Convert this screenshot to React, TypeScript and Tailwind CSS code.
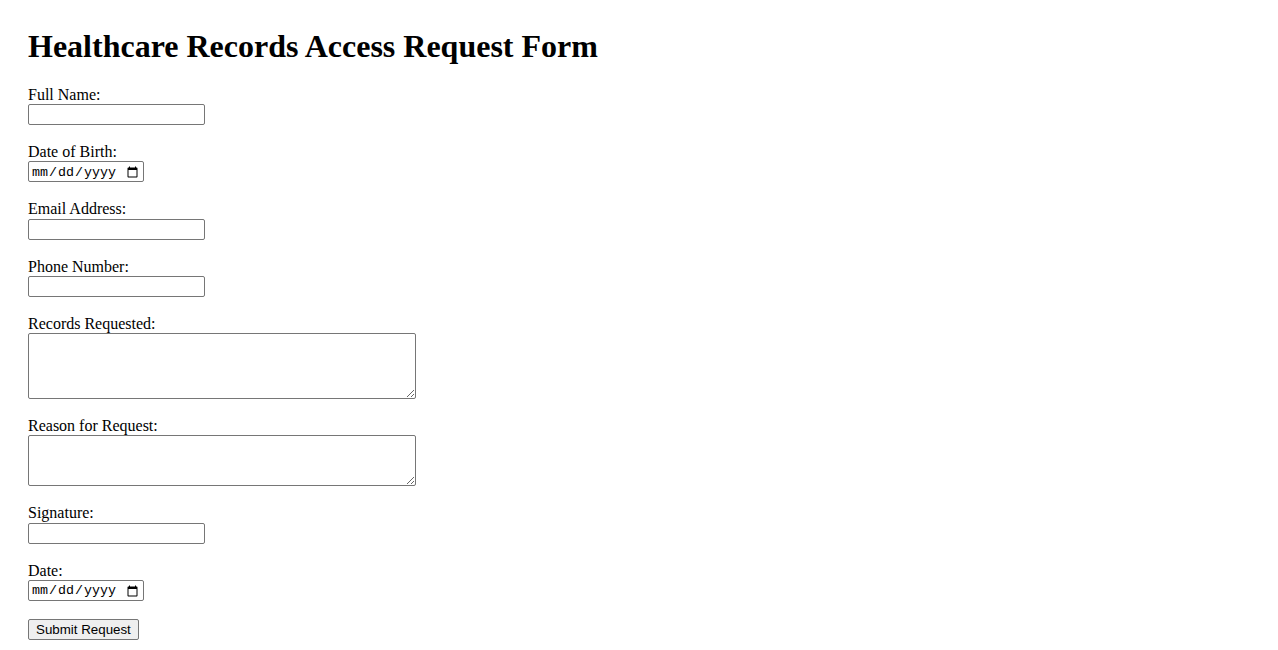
import React from 'react';

const fields = [
  { id: 'fullName', label: 'Full Name:', kind: 'text' },
  { id: 'dob', label: 'Date of Birth:', kind: 'date' },
  { id: 'email', label: 'Email Address:', kind: 'email' },
  { id: 'phone', label: 'Phone Number:', kind: 'tel' },
  { id: 'records', label: 'Records Requested:', kind: 'area4' },
  { id: 'reason', label: 'Reason for Request:', kind: 'area3' },
  { id: 'signature', label: 'Signature:', kind: 'text' },
  { id: 'date', label: 'Date:', kind: 'date' },
];

const boxBase =
  'block border border-[#767676] rounded-[2px] bg-white text-black outline-none';

function Field({ id, label, kind }: { id: string; label: string; kind: string }) {
  let control: React.ReactNode;
  if (kind === 'date') {
    control = (
      <input
        id={id}
        type="date"
        className={`${boxBase} w-[116px] h-[21px] px-[2px] pt-[2px] text-[13.33px] font-['Liberation_Mono',monospace]`}
      />
    );
  } else if (kind === 'area4') {
    control = (
      <textarea
        id={id}
        className={`${boxBase} w-[388px] h-[66px] p-[2px] text-[13.33px] font-['Liberation_Mono',monospace]`}
      />
    );
  } else if (kind === 'area3') {
    control = (
      <textarea
        id={id}
        className={`${boxBase} w-[388px] h-[51px] p-[2px] text-[13.33px] font-['Liberation_Mono',monospace]`}
      />
    );
  } else {
    control = (
      <input
        id={id}
        type={kind}
        className={`${boxBase} w-[177px] h-[21px] px-[2px] py-[1px] text-[13.33px] font-['Liberation_Sans',Arial,sans-serif]`}
      />
    );
  }

  return (
    <div className="mb-[18px]">
      <label htmlFor={id} className="block leading-[18.25px]">
        {label}
      </label>
      {control}
    </div>
  );
}

export default function App() {
  return (
    <div className="min-h-screen bg-white text-black font-['Liberation_Serif','Times_New_Roman',serif] text-[16px] pl-[28px] pt-[28px]">
      <h1 className="text-[32px] font-bold leading-[37px] mb-[20.75px]">
        Healthcare Records Access Request Form
      </h1>
      <form onSubmit={(e) => e.preventDefault()}>
        {fields.map((f) => (
          <Field key={f.id} {...f} />
        ))}
        <button
          type="submit"
          className="block h-[21px] px-[7px] border border-[#767676] rounded-[2px] bg-[#efefef] text-[13.33px] leading-[15px] font-['Liberation_Sans',Arial,sans-serif] text-black"
        >
          Submit Request
        </button>
      </form>
    </div>
  );
}
